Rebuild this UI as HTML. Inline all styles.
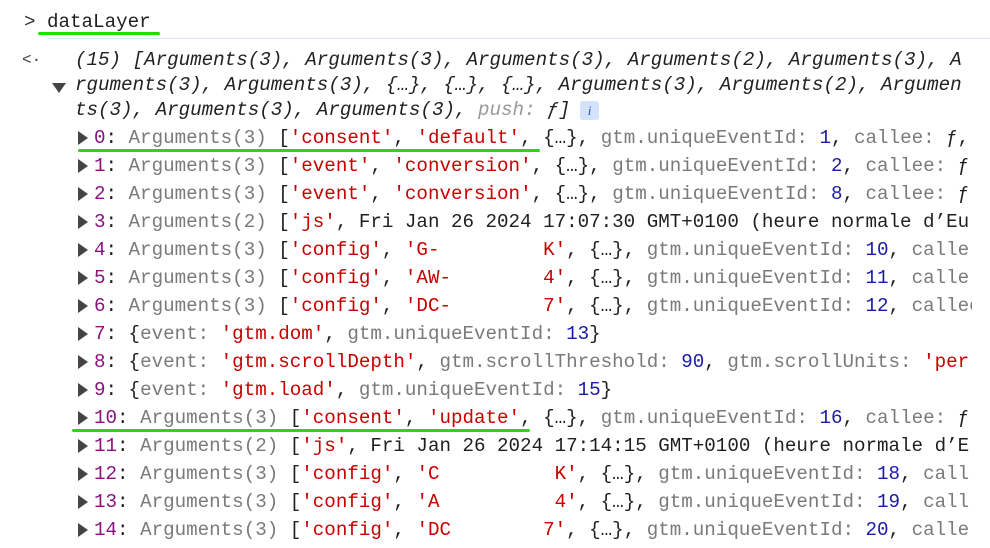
<!DOCTYPE html>
<html><head><meta charset="utf-8"><style>
body{margin:0;width:990px;height:548px;background:#fff;overflow:hidden;position:relative;font-family:"Liberation Mono",monospace;font-size:19.2px;color:#1f1f1f}
.l{position:absolute;white-space:pre;line-height:24px;height:24px;overflow:hidden;right:18px}
.i{font-style:italic;color:#222}
.g{color:#7a7a7a}.k{color:#881280}.s{color:#c80000}.n{color:#1a1aa6}.d{color:#222}
.tri{position:absolute;width:0;height:0;border-top:7px solid transparent;border-bottom:7px solid transparent;border-left:10px solid #444}
.gl{position:absolute;height:3px;background:#22dd00;border-radius:2px}
</style></head><body>
<div class="l" style="left:24px;top:10px;color:#333">&gt;</div>
<div class="l" style="left:47px;top:10px">dataLayer</div>
<div class="gl" style="left:38px;top:32px;width:122px"></div>
<div style="position:absolute;left:47px;right:0;top:38px;height:1px;background:#dde3ef"></div>
<div class="l" style="left:22px;top:48px;color:#444;font-size:16px">&lt;·</div>
<div class="l i" style="left:75px;top:48px">(15) [Arguments(3), Arguments(3), Arguments(3), Arguments(2), Arguments(3), A</div>
<div style="position:absolute;left:52px;top:83px;width:0;height:0;border-left:7px solid transparent;border-right:7px solid transparent;border-top:10px solid #444"></div>
<div class="l i" style="left:75px;top:73px">rguments(3), Arguments(3), {…}, {…}, {…}, Arguments(3), Arguments(2), Argumen</div>
<div class="l i" style="left:75px;top:98px">ts(3), Arguments(3), Arguments(3), <span style="color:#999">push: </span>ƒ]</div>
<div style="position:absolute;left:580px;top:101px;width:19px;height:19px;background:#d5e2fb;border-radius:3px;color:#1a56c0;font-size:13px;text-align:center;line-height:19px;font-family:'Liberation Serif',serif;font-style:italic">i</div>

<div class="tri" style="left:78px;top:131px"></div><div class="l" style="left:94px;top:126px"><span class="k">0</span>: <span class="g">Arguments(3)</span> [<span class="s">'consent'</span>, <span class="s">'default'</span>, {…}, <span class="g">gtm.uniqueEventId:</span> <span class="n">1</span>, <span class="g">callee:</span> ƒ,</div>
<div class="gl" style="left:78px;top:149px;width:462px"></div>
<div class="tri" style="left:78px;top:159px"></div><div class="l" style="left:94px;top:154px"><span class="k">1</span>: <span class="g">Arguments(3)</span> [<span class="s">'event'</span>, <span class="s">'conversion'</span>, {…}, <span class="g">gtm.uniqueEventId:</span> <span class="n">2</span>, <span class="g">callee:</span> ƒ</div>
<div class="tri" style="left:78px;top:187px"></div><div class="l" style="left:94px;top:182px"><span class="k">2</span>: <span class="g">Arguments(3)</span> [<span class="s">'event'</span>, <span class="s">'conversion'</span>, {…}, <span class="g">gtm.uniqueEventId:</span> <span class="n">8</span>, <span class="g">callee:</span> ƒ</div>
<div class="tri" style="left:78px;top:215px"></div><div class="l" style="left:94px;top:210px"><span class="k">3</span>: <span class="g">Arguments(2)</span> [<span class="s">'js'</span>, Fri Jan 26 2024 17:07:30 GMT+0100 (heure normale d’Eu</div>
<div class="tri" style="left:78px;top:243px"></div><div class="l" style="left:94px;top:238px"><span class="k">4</span>: <span class="g">Arguments(3)</span> [<span class="s">'config'</span>, <span class="s">'G-         K'</span>, {…}, <span class="g">gtm.uniqueEventId:</span> <span class="n">10</span>, <span class="g">calle</span></div>
<div class="tri" style="left:78px;top:271px"></div><div class="l" style="left:94px;top:266px"><span class="k">5</span>: <span class="g">Arguments(3)</span> [<span class="s">'config'</span>, <span class="s">'AW-        4'</span>, {…}, <span class="g">gtm.uniqueEventId:</span> <span class="n">11</span>, <span class="g">calle</span></div>
<div class="tri" style="left:78px;top:299px"></div><div class="l" style="left:94px;top:294px"><span class="k">6</span>: <span class="g">Arguments(3)</span> [<span class="s">'config'</span>, <span class="s">'DC-        7'</span>, {…}, <span class="g">gtm.uniqueEventId:</span> <span class="n">12</span>, <span class="g">callee</span></div>
<div class="tri" style="left:78px;top:327px"></div><div class="l" style="left:94px;top:322px"><span class="k">7</span>: {<span class="g">event:</span> <span class="s">'gtm.dom'</span>, <span class="g">gtm.uniqueEventId:</span> <span class="n">13</span>}</div>
<div class="tri" style="left:78px;top:355px"></div><div class="l" style="left:94px;top:350px"><span class="k">8</span>: {<span class="g">event:</span> <span class="s">'gtm.scrollDepth'</span>, <span class="g">gtm.scrollThreshold:</span> <span class="n">90</span>, <span class="g">gtm.scrollUnits:</span> <span class="s">'per</span></div>
<div class="tri" style="left:78px;top:383px"></div><div class="l" style="left:94px;top:378px"><span class="k">9</span>: {<span class="g">event:</span> <span class="s">'gtm.load'</span>, <span class="g">gtm.uniqueEventId:</span> <span class="n">15</span>}</div>
<div class="tri" style="left:78px;top:411px"></div><div class="l" style="left:94px;top:406px"><span class="k">10</span>: <span class="g">Arguments(3)</span> [<span class="s">'consent'</span>, <span class="s">'update'</span>, {…}, <span class="g">gtm.uniqueEventId:</span> <span class="n">16</span>, <span class="g">callee:</span> ƒ</div>
<div class="gl" style="left:72px;top:429px;width:458px"></div>
<div class="tri" style="left:78px;top:439px"></div><div class="l" style="left:94px;top:434px"><span class="k">11</span>: <span class="g">Arguments(2)</span> [<span class="s">'js'</span>, Fri Jan 26 2024 17:14:15 GMT+0100 (heure normale d’E</div>
<div class="tri" style="left:78px;top:467px"></div><div class="l" style="left:94px;top:462px"><span class="k">12</span>: <span class="g">Arguments(3)</span> [<span class="s">'config'</span>, <span class="s">'C          K'</span>, {…}, <span class="g">gtm.uniqueEventId:</span> <span class="n">18</span>, <span class="g">call</span></div>
<div class="tri" style="left:78px;top:495px"></div><div class="l" style="left:94px;top:490px"><span class="k">13</span>: <span class="g">Arguments(3)</span> [<span class="s">'config'</span>, <span class="s">'A          4'</span>, {…}, <span class="g">gtm.uniqueEventId:</span> <span class="n">19</span>, <span class="g">call</span></div>
<div class="tri" style="left:78px;top:523px"></div><div class="l" style="left:94px;top:518px"><span class="k">14</span>: <span class="g">Arguments(3)</span> [<span class="s">'config'</span>, <span class="s">'DC        7'</span>, {…}, <span class="g">gtm.uniqueEventId:</span> <span class="n">20</span>, <span class="g">calle</span></div>
</body></html>
